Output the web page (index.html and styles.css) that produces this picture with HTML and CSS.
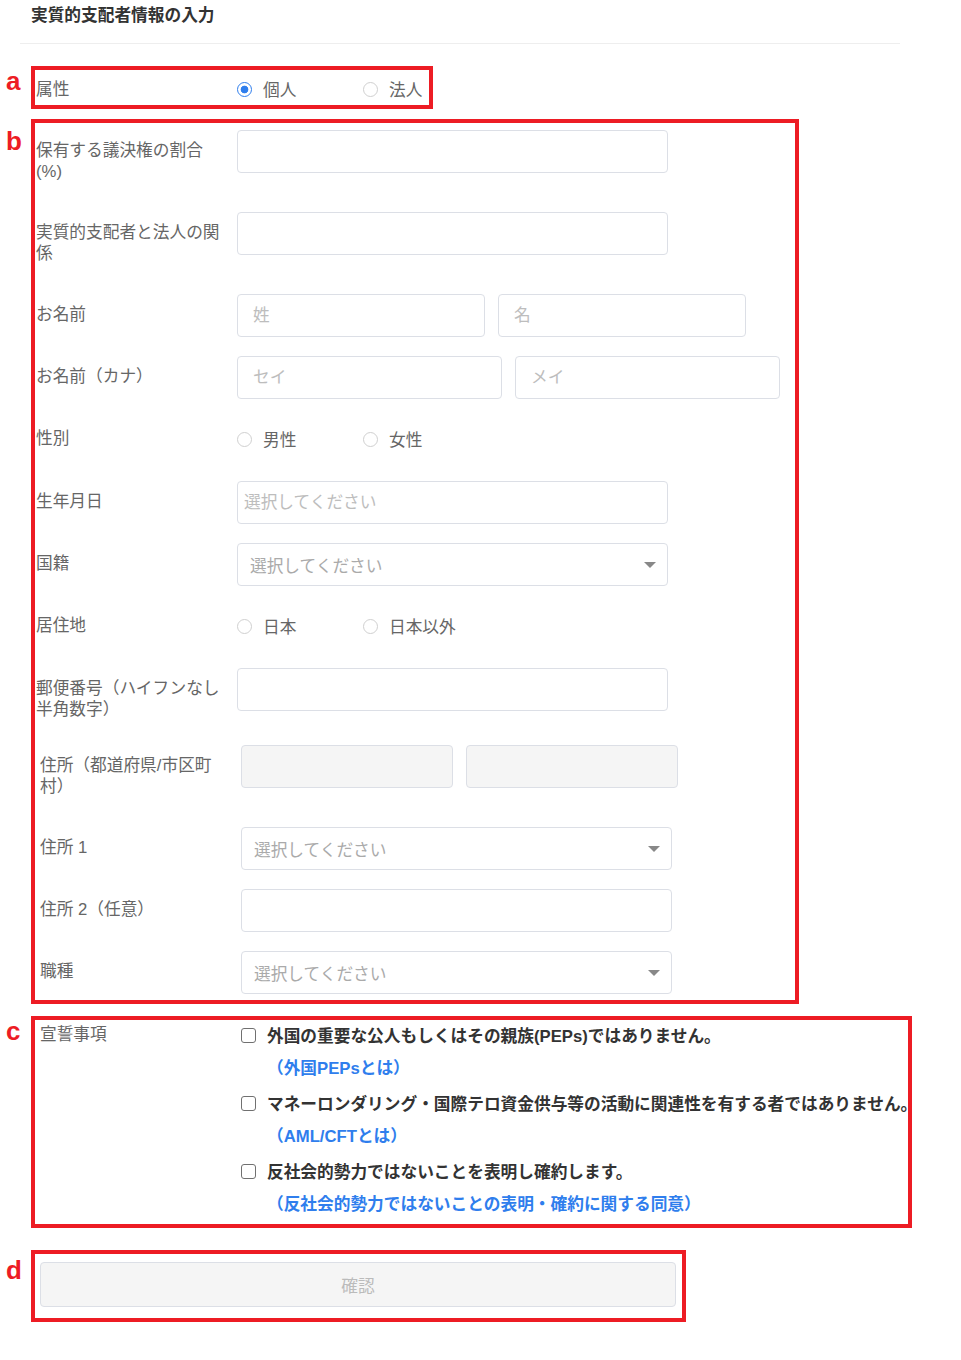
FILE: index.html
```html
<!doctype html>
<html lang="ja">

<head>
    <meta charset="UTF-8" />
    <meta name="viewport" content="width=device-width, initial-scale=1.0" />
    <title>実質的支配者情報の入力</title>
    <link rel="stylesheet" href="styles.css">
</head>

<body>
    <div class="page">
        <h2 class="page-title">実質的支配者情報の入力</h2>
        <hr class="divider" />

        <!-- a: 属性 -->
        <div class="note note-a">
            <span class="note-mark">a</span>
            <div class="note-box box-a">
                <div class="row row-inline">
                    <div class="row-label">属性</div>
                    <div class="radios">
                        <label class="radio"><span class="radio-dot is-checked"></span>個人</label>
                        <label class="radio"><span class="radio-dot"></span>法人</label>
                    </div>
                </div>
            </div>
        </div>

        <!-- b: 本人情報 -->
        <div class="note note-b">
            <span class="note-mark">b</span>
            <div class="note-box box-b">
                <div class="row">
                    <div class="row-label">保有する議決権の割合(%)</div>
                    <input class="field" type="text" />
                </div>
                <div class="row">
                    <div class="row-label">実質的支配者と法人の関係</div>
                    <input class="field" type="text" />
                </div>
                <div class="row">
                    <div class="row-label">お名前</div>
                    <div class="field-pair">
                        <input class="field field-name" type="text" placeholder="姓" />
                        <input class="field field-name" type="text" placeholder="名" />
                    </div>
                </div>
                <div class="row">
                    <div class="row-label">お名前（カナ）</div>
                    <div class="field-pair">
                        <input class="field field-kana" type="text" placeholder="セイ" />
                        <input class="field field-kana" type="text" placeholder="メイ" />
                    </div>
                </div>
                <div class="row">
                    <div class="row-label">性別</div>
                    <div class="radios">
                        <label class="radio"><span class="radio-dot"></span>男性</label>
                        <label class="radio"><span class="radio-dot"></span>女性</label>
                    </div>
                </div>
                <div class="row">
                    <div class="row-label">生年月日</div>
                    <input class="field field-date" type="text" placeholder="選択してください" />
                </div>
                <div class="row">
                    <div class="row-label">国籍</div>
                    <div class="field select">
                        <span>選択してください</span>
                        <span class="select-arrow"></span>
                    </div>
                </div>
                <div class="row">
                    <div class="row-label">居住地</div>
                    <div class="radios">
                        <label class="radio"><span class="radio-dot"></span>日本</label>
                        <label class="radio"><span class="radio-dot"></span>日本以外</label>
                    </div>
                </div>
                <div class="row row-zip">
                    <div class="row-label">郵便番号（ハイフンなし半角数字）</div>
                    <input class="field" type="text" />
                </div>

                <div class="address">
                    <div class="row">
                        <div class="row-label">住所（都道府県/市区町村）</div>
                        <div class="field-pair">
                            <input class="field field-pref" type="text" disabled />
                            <input class="field field-pref" type="text" disabled />
                        </div>
                    </div>
                    <div class="row">
                        <div class="row-label">住所 1</div>
                        <div class="field select">
                            <span>選択してください</span>
                            <span class="select-arrow"></span>
                        </div>
                    </div>
                    <div class="row">
                        <div class="row-label">住所 2（任意）</div>
                        <input class="field" type="text" />
                    </div>
                    <div class="row">
                        <div class="row-label">職種</div>
                        <div class="field select">
                            <span>選択してください</span>
                            <span class="select-arrow"></span>
                        </div>
                    </div>
                </div>
            </div>
        </div>

        <!-- c: 宣誓事項 -->
        <div class="note note-c">
            <span class="note-mark">c</span>
            <div class="note-box box-c">
                <div class="row row-pledge">
                    <div class="row-label">宣誓事項</div>
                    <div class="pledges">
                        <div class="pledge">
                            <label class="pledge-check"><span class="checkbox"></span>外国の重要な公人もしくはその親族(PEPs)ではありません。</label>
                            <a class="pledge-link" href="#">（外国PEPsとは）</a>
                        </div>
                        <div class="pledge">
                            <label class="pledge-check"><span class="checkbox"></span>マネーロンダリング・国際テロ資金供与等の活動に関連性を有する者ではありません。</label>
                            <a class="pledge-link" href="#">（AML/CFTとは）</a>
                        </div>
                        <div class="pledge">
                            <label class="pledge-check"><span class="checkbox"></span>反社会的勢力ではないことを表明し確約します。</label>
                            <a class="pledge-link" href="#">（反社会的勢力ではないことの表明・確約に関する同意）</a>
                        </div>
                    </div>
                </div>
            </div>
        </div>

        <!-- d: 確認 -->
        <div class="note note-d">
            <span class="note-mark">d</span>
            <div class="note-box box-d">
                <button class="confirm" type="button" disabled>確認</button>
            </div>
        </div>
    </div>
</body>

</html>
```

FILE: styles.css
```css
:root {
    --mark-color: #ed1c24;
    --label-color: #666;
    --text-color: #333;
    --link-color: #2f7eed;
    --border-color: #dcdfe6;
    --placeholder-color: #bdbdbd;
}

body {
    margin: 0;
    background-color: #fff;
    color: var(--label-color);
    font-family: "Liberation Sans", "Noto Sans CJK JP", sans-serif;
    font-size: 16.7px;
}

.page {
    padding-bottom: 40px;
}

.page-title {
    margin: 0;
    padding: 1px 0 0 31px;
    line-height: 30px;
    font-size: 16.7px;
    font-weight: 700;
    color: var(--text-color);
}

.divider {
    width: 880px;
    height: 1px;
    margin: 12px 0 0 20px;
    border: 0;
    background-color: #eee;
}

/* annotation frames */
.note {
    display: flex;
    align-items: flex-start;
}

.note-a {
    margin-top: 22px;
}

.note-b {
    margin-top: 10px;
}

.note-c {
    margin-top: 12px;
}

.note-d {
    margin-top: 22px;
}

.note-mark {
    flex: none;
    width: 31px;
    box-sizing: border-box;
    padding: 2px 0 0 6px;
    font-family: "Liberation Sans", sans-serif;
    font-size: 26px;
    line-height: 26px;
    font-weight: 700;
    color: var(--mark-color);
}

.note-b .note-mark {
    padding-top: 9px;
}

.note-d .note-mark {
    padding-top: 7px;
}

.note-box {
    box-sizing: border-box;
    border: 4px solid var(--mark-color);
}

.box-a {
    width: 402px;
    padding: 3px 0 0 1px;
}

.box-b {
    width: 768px;
    padding: 7px 0 6px 1px;
}

.box-c {
    width: 881px;
    padding-left: 5px;
}

.box-d {
    width: 655px;
    padding: 8px 6px 11px 5px;
}

/* form rows */
.row {
    display: flex;
    align-items: flex-start;
    margin-bottom: 19px;
}

.row:last-child {
    margin-bottom: 0;
}

.row-zip {
    margin-bottom: 14px;
}

.row-label {
    flex: none;
    width: 201px;
    box-sizing: border-box;
    padding: 10px 15px 11px 0;
    line-height: 21px;
}

.row-inline {
    align-items: center;
    height: 32px;
}

.row-inline .row-label {
    padding-top: 0;
    padding-bottom: 0;
}

.address {
    padding-left: 4px;
}

.field {
    width: 431px;
    height: 43px;
    box-sizing: border-box;
    padding: 0 12px;
    border: 1px solid var(--border-color);
    border-radius: 4px;
    background-color: #fff;
    color: var(--label-color);
    font: inherit;
    outline: none;
}

.field::placeholder {
    color: var(--placeholder-color);
}

.field:disabled {
    background-color: #f5f5f5;
}

.field-pair {
    display: flex;
    gap: 13px;
}

.field-name {
    width: 248px;
    padding-left: 15px;
}

.field-kana {
    width: 265px;
    padding-left: 15px;
}

.field-pref {
    width: 212px;
}

.field-date {
    padding-left: 6px;
}

.select {
    display: flex;
    align-items: center;
    justify-content: space-between;
    padding: 0 11px 0 12px;
    color: #aaa;
}

.select-arrow {
    width: 0;
    height: 0;
    border-left: 6px solid transparent;
    border-right: 6px solid transparent;
    border-top: 6px solid #888;
}

/* radios */
.radios {
    display: flex;
    align-items: center;
    height: 42px;
    padding-bottom: 2px;
}

.row-inline .radios {
    height: 32px;
    padding-bottom: 0;
}

.radio {
    display: flex;
    align-items: center;
    gap: 11px;
    width: 126px;
}

.radio:last-child {
    width: auto;
}

.radio-dot {
    flex: none;
    width: 15px;
    height: 15px;
    box-sizing: border-box;
    border: 1px solid #d0d0d0;
    border-radius: 50%;
    background-color: #fff;
}

.radio-dot.is-checked {
    border-color: #2f7eed;
    background: radial-gradient(circle, #2f7eed 0 3.5px, #fff 4.2px);
}

/* pledges */
.row-pledge .row-label {
    padding: 0;
    line-height: 30px;
}

.pledge-check {
    display: flex;
    align-items: center;
    gap: 11px;
    height: 30px;
    white-space: nowrap;
    font-weight: 700;
    color: var(--text-color);
}

.checkbox {
    flex: none;
    width: 15px;
    height: 15px;
    box-sizing: border-box;
    border: 1.5px solid #707070;
    border-radius: 3px;
    background-color: #fff;
}

.pledge-link {
    display: block;
    height: 38px;
    padding-left: 26px;
    line-height: 38px;
    font-weight: 700;
    color: var(--link-color);
    text-decoration: none;
}

/* confirm */
.confirm {
    display: block;
    width: 636px;
    height: 45px;
    border: 1px solid var(--border-color);
    border-radius: 4px;
    background-color: #f5f5f5;
    color: #bbb;
    font: inherit;
}
```
